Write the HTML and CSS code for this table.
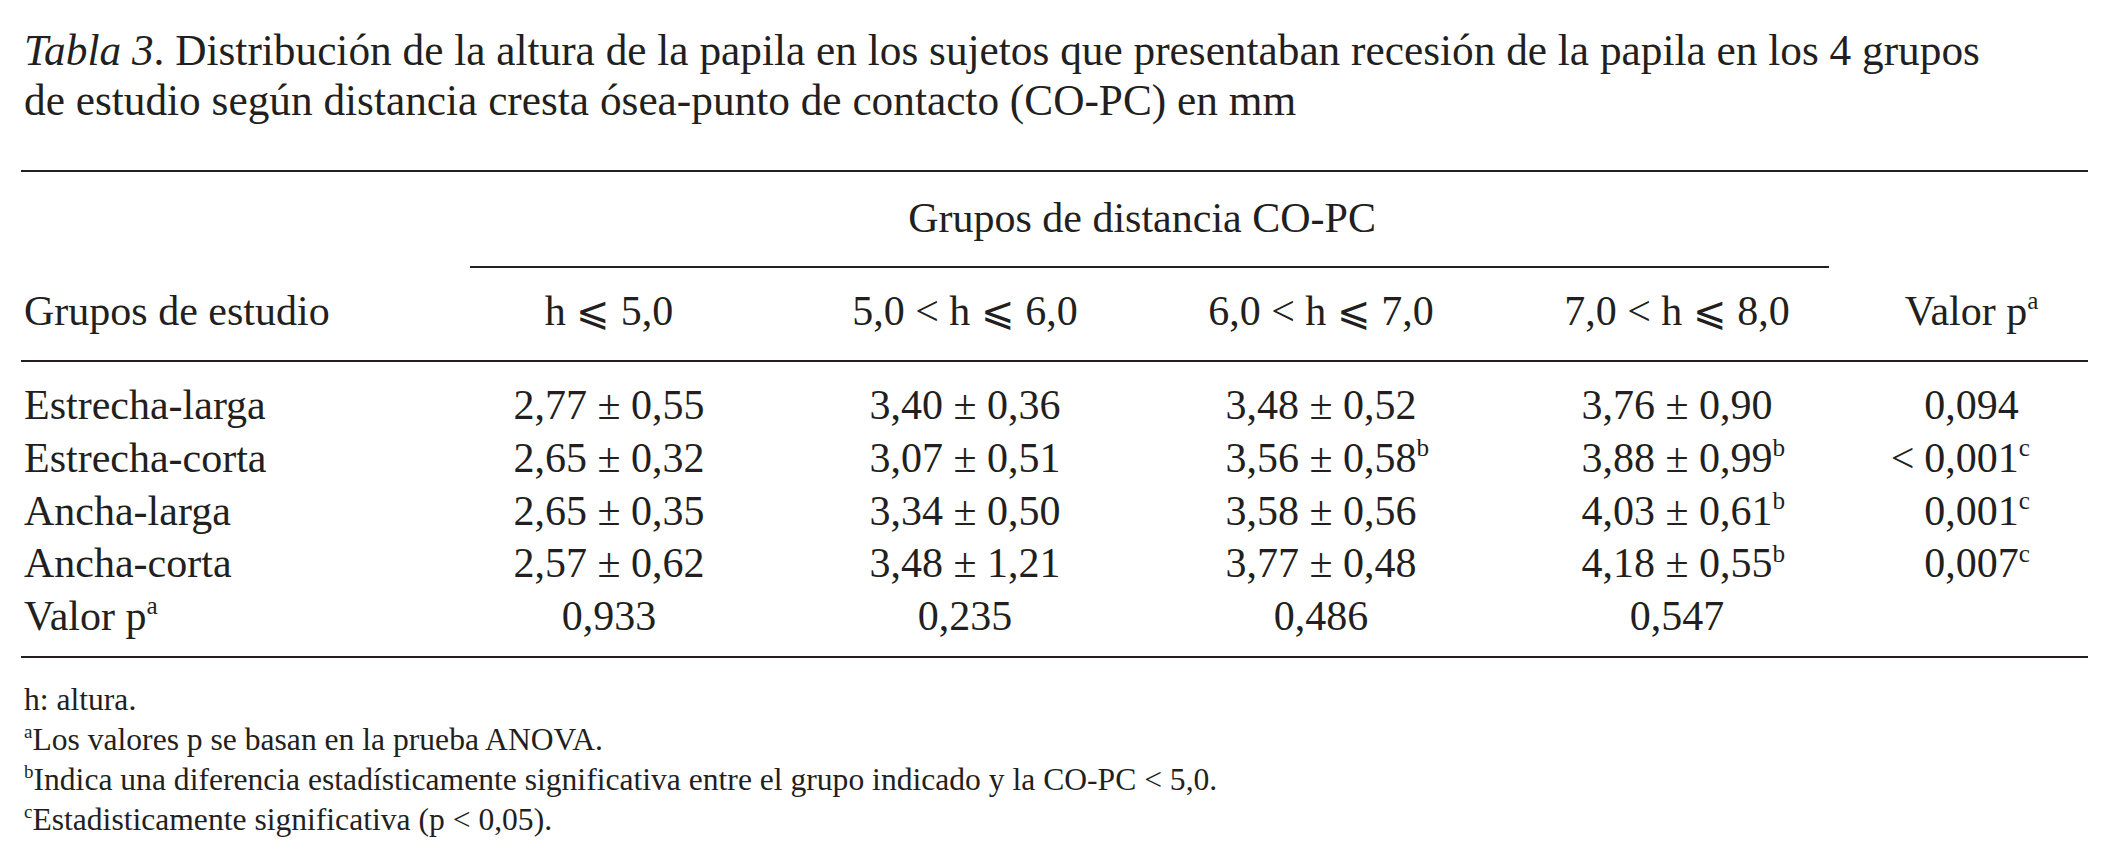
FILE: index.html
```html
<!DOCTYPE html>
<html lang="es">
<head>
<meta charset="utf-8">
<title>Tabla 3</title>
<link rel="stylesheet" href="styles.css">
</head>
<body>
<div class="page">
  <p class="caption"><span class="tnum">Tabla 3</span>. Distribución de la altura de la papila en los sujetos que presentaban recesión de la papila en los 4 grupos de estudio según distancia cresta ósea-punto de contacto (CO-PC) en mm</p>
  <table class="data">
    <colgroup>
      <col class="c-first">
      <col class="c-mid">
      <col class="c-mid">
      <col class="c-mid">
      <col class="c-mid">
      <col class="c-last">
    </colgroup>
    <thead>
      <tr class="h1">
        <th></th>
        <th colspan="4" class="span"><div class="span-in">Grupos de distancia CO-PC</div></th>
        <th></th>
      </tr>
      <tr class="h2">
        <th class="left">Grupos de estudio</th>
        <th>h <span class="le">⩽</span> 5,0</th>
        <th>5,0 &lt; h <span class="le">⩽</span> 6,0</th>
        <th>6,0 &lt; h <span class="le">⩽</span> 7,0</th>
        <th>7,0 &lt; h <span class="le">⩽</span> 8,0</th>
        <th>Valor p<sup class="sup">a</sup></th>
      </tr>
    </thead>
    <tbody>
      <tr class="first">
        <td class="left">Estrecha-larga</td>
        <td>2,77 ± 0,55</td>
        <td>3,40 ± 0,36</td>
        <td>3,48 ± 0,52</td>
        <td>3,76 ± 0,90</td>
        <td>0,094</td>
      </tr>
      <tr>
        <td class="left">Estrecha-corta</td>
        <td>2,65 ± 0,32</td>
        <td>3,07 ± 0,51</td>
        <td>3,56 ± 0,58<sup class="hang">b</sup></td>
        <td>3,88 ± 0,99<sup class="hang">b</sup></td>
        <td><span class="pre">&lt;</span>0,001<sup class="hang">c</sup></td>
      </tr>
      <tr>
        <td class="left">Ancha-larga</td>
        <td>2,65 ± 0,35</td>
        <td>3,34 ± 0,50</td>
        <td>3,58 ± 0,56</td>
        <td>4,03 ± 0,61<sup class="hang">b</sup></td>
        <td>0,001<sup class="hang">c</sup></td>
      </tr>
      <tr>
        <td class="left">Ancha-corta</td>
        <td>2,57 ± 0,62</td>
        <td>3,48 ± 1,21</td>
        <td>3,77 ± 0,48</td>
        <td>4,18 ± 0,55<sup class="hang">b</sup></td>
        <td>0,007<sup class="hang">c</sup></td>
      </tr>
      <tr class="last">
        <td class="left">Valor p<sup class="sup">a</sup></td>
        <td>0,933</td>
        <td>0,235</td>
        <td>0,486</td>
        <td>0,547</td>
        <td></td>
      </tr>
    </tbody>
  </table>
  <div class="notes">
    <p>h: altura.</p>
    <p><sup class="nsup">a</sup>Los valores p se basan en la prueba ANOVA.</p>
    <p><sup class="nsup">b</sup>Indica una diferencia estadísticamente significativa entre el grupo indicado y la CO-PC &lt; 5,0.</p>
    <p><sup class="nsup">c</sup>Estadisticamente significativa (p &lt; 0,05).</p>
  </div>
</div>
</body>
</html>
```
FILE: styles.css
```css
html, body {
  margin: 0;
  padding: 0;
  background: #ffffff;
}
body {
  font-family: "Liberation Serif", "Times New Roman", "DejaVu Serif", serif;
  color: #231f20;
  width: 2112px;
  height: 866px;
  overflow: hidden;
}
.page {
  padding: 25px 24px 0 21px;
}
.caption {
  max-width: 1990px;
  margin: 0 0 45px 3px;
  font-size: 43.3px;
  line-height: 50px;
}
.tnum {
  font-style: italic;
}
.data {
  width: 2067px;
  table-layout: fixed;
  border-collapse: separate;
  border-spacing: 0;
  border-top: 2px solid #231f20;
  font-size: 42px;
}
.c-first { width: 410px; }
.c-mid { width: 356px; }
.c-last { width: 233px; }
.data th, .data td {
  font-weight: normal;
  text-align: center;
  padding: 0;
  white-space: nowrap;
}
.data .left {
  text-align: left;
  padding-left: 3px;
}
.h1 th {
  padding-top: 21px;
  line-height: 50px;
}
.span-in {
  margin: 0 26px 0 39px;
  padding: 0 15px 23px 0;
  border-bottom: 2px solid #231f20;
}
.h2 th {
  padding: 18px 0 24px;
  line-height: 50px;
  border-bottom: 2px solid #231f20;
}
.h2 th.left { padding-left: 3px; }
.le {
  font-family: "DejaVu Serif", serif;
  font-size: 0.95em;
  line-height: 0;
}
.data td {
  line-height: 52.8px;
}
.first td { padding-top: 17px; }
.last td {
  padding-bottom: 13px;
  border-bottom: 2px solid #231f20;
}
.data .first td.left { padding-left: 3px; }
.data .last td.left { padding-left: 3px; }
.sup, .hang, .nsup {
  font-size: 0.6em;
  line-height: 0;
  vertical-align: 0.62em;
}
.hang {
  display: inline-block;
  width: 0;
  overflow: visible;
}
.pre {
  display: inline-block;
  width: 0.8em;
  margin-left: -0.8em;
  text-align: left;
}
.notes {
  margin-top: 22px;
  padding-left: 3px;
  font-size: 31.6px;
  line-height: 40px;
}
.notes p {
  margin: 0;
}
```
